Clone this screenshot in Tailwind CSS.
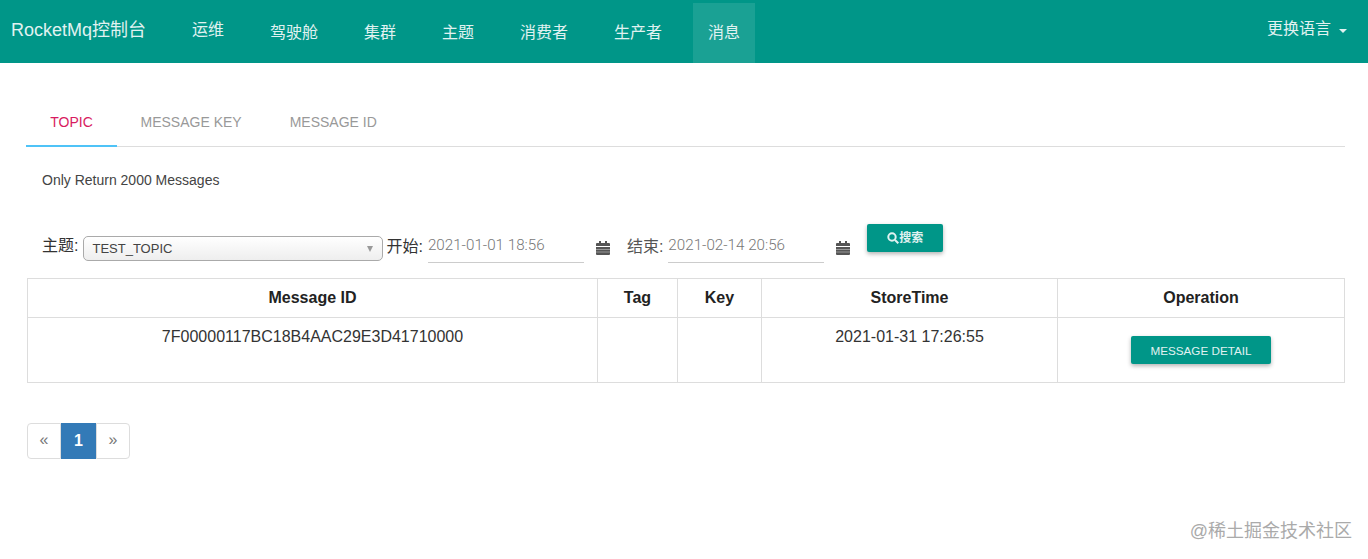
<!DOCTYPE html>
<html><head><meta charset="utf-8"><script src="https://cdn.jsdelivr.net/npm/@tailwindcss/browser@4"></script></head>
<body class="bg-white h-[559px] overflow-hidden relative font-['Liberation_Sans','Noto_Sans_CJK_SC',sans-serif] text-[#333]">
<nav class="h-[63px] bg-[#009688] text-[#e0f2f1] flex items-stretch pr-[21px]">
  <a class="w-[173px] pl-[11px] pt-[18px] text-[18px] leading-[24px]">RocketMq控制台</a>
  <ul class="flex flex-1 pt-[3px] text-[16px] leading-[22px]">
    <li class="w-[46px] mr-[32px] pt-[16px] pl-[19px] box-content">运维</li>
    <li class="w-[48px] pt-[19px] mr-[46px]">驾驶舱</li>
    <li class="w-[32px] pt-[19px] mr-[46px]">集群</li>
    <li class="w-[32px] pt-[19px] mr-[46px]">主题</li>
    <li class="w-[48px] pt-[19px] mr-[46px]">消费者</li>
    <li class="w-[48px] pt-[19px] mr-[31px]">生产者</li>
    <li class="w-[62px] pt-[19px] text-center bg-white/10">消息</li>
  </ul>
  <div class="pt-[18px] text-[16px] leading-[22px] flex items-start gap-[8px]">更换语言<span class="mt-[11px] w-0 h-0 border-x-[4px] border-x-transparent border-t-[4px] border-t-[#e0f2f1]"></span></div>
</nav>
<main class="px-[27px]">
  <div class="mt-[36px] h-[48px] w-[1319px] flex border-b border-[#ddd] text-[14px] text-[#999] -ml-[1px]">
    <div class="w-[91px] h-[48px] border-b-2 border-[#4fc3f7] text-center text-[#d81b60] leading-[47px]">TOPIC</div>
    <div class="ml-[23.500px] leading-[47px]">MESSAGE KEY</div>
    <div class="ml-[48px] leading-[47px]">MESSAGE ID</div>
  </div>
  <p class="mt-[23px] ml-[15px] text-[14px] leading-[20px] text-[#444]">Only Return 2000 Messages</p>
  <div class="mt-[34px] h-[54px] ml-[15px] flex items-start relative">
    <span class="mt-[12px] text-[#333] leading-[20px] text-[16px]">主题:</span>
    <div class="mt-[12px] ml-[5px] w-[300px] h-[25px] rounded-[5px] border border-[#aaa] bg-gradient-to-b from-white to-[#eee] flex items-center justify-between pl-[8px] pr-[9px] text-[13px] leading-none text-[#444]">TEST_TOPIC<span class="w-0 h-0 border-x-[3.500px] border-x-transparent border-t-[6px] border-t-[#999]"></span></div>
    <span class="mt-[13px] ml-[3px] leading-[20px] text-[16px]">开始:</span>
    <div class="mt-[5px] ml-[5px] w-[156px] h-[34px] border-b border-[#ccc] font-['Roboto',sans-serif] font-light text-[15.200px] leading-[33px] text-[#777]">2021-01-01 18:56</div>
    <svg class="mt-[16px] ml-[12px]" width="14" height="15" viewBox="0 0 14 15"><path fill="#555" d="M1 3h2V1h2v2h4V1h2v2h2a1 1 0 0 1 1 1v2H0V4a1 1 0 0 1 1-1zM0 7h14v7a1 1 0 0 1-1 1H1a1 1 0 0 1-1-1z"/><path stroke="#fff" stroke-width=".4" d="M0 9.500h14M0 12h14"/></svg>
    <span class="mt-[13px] ml-[17px] leading-[20px] text-[16px] text-[#555]">结束:</span>
    <div class="mt-[5px] ml-[5px] w-[156px] h-[34px] border-b border-[#ccc] font-['Roboto',sans-serif] font-light text-[15.200px] leading-[33px] text-[#777]">2021-02-14 20:56</div>
    <svg class="mt-[16px] ml-[12px]" width="14" height="15" viewBox="0 0 14 15"><path fill="#555" d="M1 3h2V1h2v2h4V1h2v2h2a1 1 0 0 1 1 1v2H0V4a1 1 0 0 1 1-1zM0 7h14v7a1 1 0 0 1-1 1H1a1 1 0 0 1-1-1z"/><path stroke="#fff" stroke-width=".4" d="M0 9.500h14M0 12h14"/></svg>
    <button class="ml-[17px] w-[76px] h-[28px] rounded-[2px] bg-[#009688] text-[#e0f2f1] text-[12px] font-bold flex items-center justify-center shadow-[0_2px_4px_rgba(0,0,0,0.3)]"><svg width="12" height="12" viewBox="0 0 12 12" fill="none" stroke="#e0f2f1" stroke-width="2"><circle cx="5" cy="5" r="3.700"/><path d="M8 8l3.300 3.300"/></svg>搜索</button>
  </div>
  <div class="grid grid-cols-[569px_80px_84px_296px_1fr] border border-[#ddd] w-[1318px] h-[105px] grid-rows-[39px_1fr] text-[16px] text-center">
    <div class="font-bold text-[#222] border-b border-[#ddd] leading-[38px]">Message ID</div>
    <div class="font-bold text-[#222] border-b border-l border-[#ddd] leading-[38px]">Tag</div>
    <div class="font-bold text-[#222] border-b border-l border-[#ddd] leading-[38px]">Key</div>
    <div class="font-bold text-[#222] border-b border-l border-[#ddd] leading-[38px]">StoreTime</div>
    <div class="font-bold text-[#222] border-b border-l border-[#ddd] leading-[38px]">Operation</div>
    <div class="pt-[8px] leading-[22px]">7F00000117BC18B4AAC29E3D41710000</div>
    <div class="border-l border-[#ddd]"></div>
    <div class="border-l border-[#ddd]"></div>
    <div class="border-l border-[#ddd] pt-[8px] leading-[22px]">2021-01-31 17:26:55</div>
    <div class="border-l border-[#ddd] flex justify-center pt-[18px]"><button class="w-[140px] h-[28px] pt-[1px] rounded-[2px] bg-[#009688] text-[#e0f2f1] text-[11.700px] shadow-[0_2px_4px_rgba(0,0,0,0.3)]">MESSAGE DETAIL</button></div>
  </div>
  <div class="mt-[40px] flex w-fit h-[36px] text-[16px] text-[#777]">
    <div class="w-[34px] border border-[#ddd] rounded-l-[4px] text-center leading-[32px]">«</div>
    <div class="w-[35px] bg-[#337ab7] text-white font-bold text-center leading-[36px]">1</div>
    <div class="w-[34px] border border-[#ddd] rounded-r-[4px] text-center leading-[32px]">»</div>
  </div>
</main>
<span class="absolute right-[16px] bottom-[16px] text-[18px] leading-[24px] text-[#aaa]">@稀土掘金技术社区</span>
</body></html>
